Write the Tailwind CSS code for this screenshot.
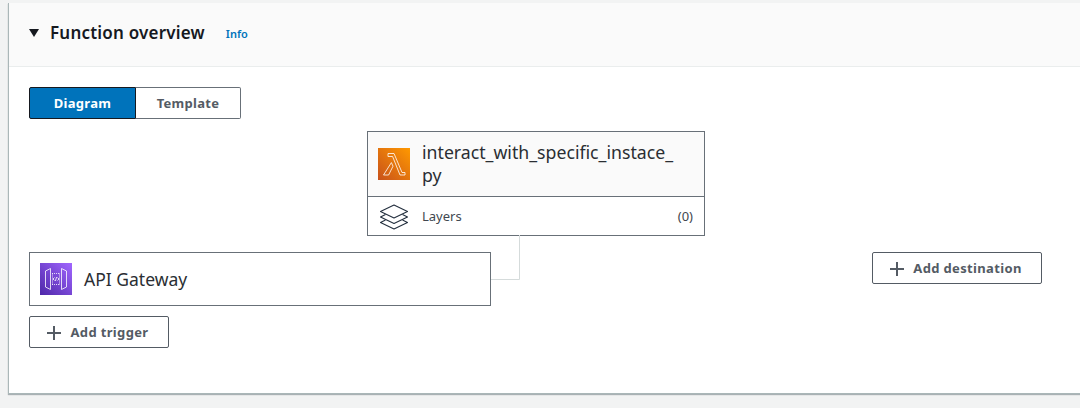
<!DOCTYPE html>
<html lang="en">
<head>
    <meta charset="UTF-8">
    <script src="https://cdn.jsdelivr.net/npm/@tailwindcss/browser@4"></script>
    <title>Function overview</title>
</head>
<body class="bg-[#f2f3f3] h-[408px] w-[1080px] overflow-hidden font-['Noto_Sans',sans-serif] text-[#16191f]">

<section class="mt-[3px] ml-[8px] w-[1072px] h-[391px] bg-white border-l border-b border-[#aab7b8] shadow-[0_1px_1px_rgba(0,28,36,0.3)] flex flex-col">
    <header class="h-[64px] bg-[#fafafa] border-b border-[#eaeded] flex items-center pl-[20px] pb-[4px] shrink-0">
        <svg width="10" height="8" viewBox="0 0 10 8" class="mr-[11px]"><path d="M0 0h10L5 8z" fill="#16191f"/></svg>
        <h2 class="text-[17px] font-semibold leading-[22px] tracking-[0.2px]">Function overview</h2>
        <a class="ml-[21px] text-[11px] font-semibold text-[#0073bb] mt-[3px]">Info</a>
    </header>

    <div class="relative flex-1">
        <div class="absolute left-[20px] top-[20px] flex h-[32px] w-[212px] text-[13px] font-bold tracking-[0.3px]">
            <button class="w-[107px] pt-[1px] bg-[#0073bb] border border-[#16191f] rounded-l-[2px] text-white">Diagram</button>
            <button class="flex-1 pt-[1px] bg-white border border-l-0 border-[#687078] rounded-r-[2px] text-[#545b64]">Template</button>
        </div>

        <div class="absolute left-[358px] top-[64px] w-[338px] h-[105px] border border-[#687078] bg-white flex flex-col">
            <div class="h-[65px] bg-[#fafafa] border-b border-[#687078] flex items-center pl-[10px] shrink-0">
                <svg width="32" height="32" viewBox="0 0 32 32" class="shrink-0">
                    <defs><linearGradient id="lambdaBg" x1="0" y1="1" x2="1" y2="0"><stop offset="0" stop-color="#c8511b"/><stop offset="1" stop-color="#ff9900"/></linearGradient></defs>
                    <rect width="32" height="32" fill="url(#lambdaBg)"/>
                    <path d="M10 5.5h6l8 19h3v2.5h-5L14.6 8.5H10zM13.4 14.6l1.6 3.6L10.6 27H5.5z" fill="none" stroke="#fff" stroke-width="0.8"/>
                </svg>
                <div class="ml-[12px] w-[264px] text-[17.7px] leading-[23px] text-[#2a2e33]">interact_with_specific_instace_<br>py</div>
            </div>
            <div class="flex-1 flex items-center pl-[12px] pr-[11px] pt-[1px] text-[13px] text-[#414750]">
                <svg width="28" height="26" viewBox="0 0 28 26" class="shrink-0" fill="none" stroke="#232f3e" stroke-width="1.1" stroke-linejoin="round">
                    <path d="M14 1 L27.5 7.5 L14 14 L0.5 7.5z"/>
                    <path d="M5.5 10.5 L0.5 13 L14 19.5 L27.5 13 L22.5 10.5"/>
                    <path d="M5.5 16 L0.5 18.5 L14 25 L27.5 18.5 L22.5 16"/>
                </svg>
                <span class="ml-[14px]">Layers</span>
                <span class="ml-auto">(0)</span>
            </div>
        </div>

        <svg class="absolute left-[481px] top-[168px]" width="32" height="46" fill="none" stroke="#d5dbdb"><path d="M29.5 0V44.5H0"/></svg>

        <div class="absolute left-[20px] top-[185px] w-[462px] h-[54px] border border-[#687078] bg-white flex items-center pl-[10px]">
            <svg width="32" height="32" viewBox="0 0 32 32" class="shrink-0">
                <defs><linearGradient id="apiBg" x1="0" y1="1" x2="1" y2="0"><stop offset="0" stop-color="#4d27a8"/><stop offset="1" stop-color="#a166ff"/></linearGradient></defs>
                <rect width="32" height="32" fill="url(#apiBg)"/>
                <g fill="none" stroke="#fff" stroke-width="0.8">
                    <path d="M5.5 8l5-2.5v21l-5-2.5zM26.5 8l-5-2.5v21l5-2.5z"/>
                    <path d="M12 10.5h8M12 21.5h8M12.5 10.5v11M19.5 10.5v11" stroke-dasharray="1 1"/>
                    <path d="M14.5 14.5l-1.5 1.5 1.5 1.5M17.5 14.5l1.5 1.5-1.5 1.5M16.6 14l-1.2 4"/>
                </g>
            </svg>
            <span class="ml-[12px] text-[17.5px] text-[#2a2e33]">API Gateway</span>
        </div>

        <button class="absolute left-[20px] top-[249px] w-[140px] h-[32px] pr-[3px] pt-[1px] border border-[#545b64] rounded-[2px] bg-white flex items-center justify-center text-[13px] font-bold text-[#545b64] tracking-[0.35px]">
            <svg width="16" height="16" viewBox="0 0 16 16" class="mr-[8px]"><path d="M8 1v14M1 8h14" stroke="#545b64" stroke-width="2"/></svg>Add trigger
        </button>

        <button class="absolute left-[863px] top-[185px] w-[170px] h-[32px] pr-[3px] pt-[1px] border border-[#545b64] rounded-[2px] bg-white flex items-center justify-center text-[13px] font-bold text-[#545b64] tracking-[0.35px]">
            <svg width="16" height="16" viewBox="0 0 16 16" class="mr-[8px]"><path d="M8 1v14M1 8h14" stroke="#545b64" stroke-width="2"/></svg>Add destination
        </button>
    </div>
</section>

</body>
</html>
